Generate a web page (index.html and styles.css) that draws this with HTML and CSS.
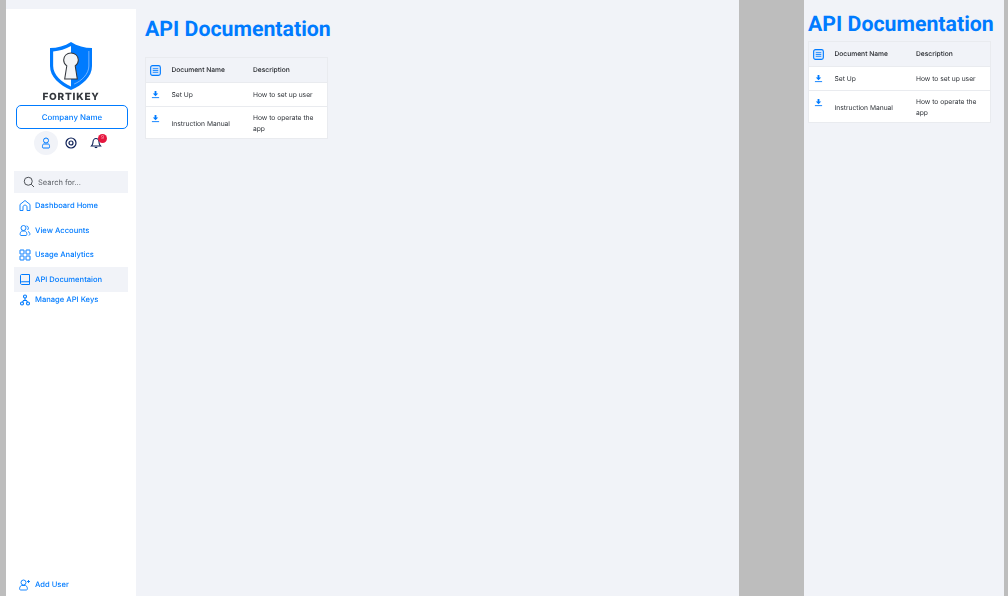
FILE: index.html
```html
<!DOCTYPE html>
<html lang="en">
<head>
    <meta charset="UTF-8">
    <meta name="viewport" content="width=device-width, initial-scale=1.0">
    <title>API Documentation</title>
    <link rel="stylesheet" href="styles.css">
</head>
<body>
    <div class="screen">
        <aside class="sidebar">
            <div class="logo">
                <svg class="logo_mark" viewBox="1 0 40 50" width="42" height="50" preserveAspectRatio="none">
                    <path d="M21 1 C27 5 34 7 41 7 V25 C41 36 32 44 21 49 C10 44 1 36 1 25 V7 C8 7 15 5 21 1 Z" fill="#007bff"/>
                    <path d="M21 5 C16 8 10 10 4 10.500 V25 C4 34 12 41 21 45.500 Z" fill="#fff"/>
                    <path d="M38 10 L38 25 C38 33 31 40 24 43" fill="none" stroke="#8fc1ff" stroke-width="0.8"/>
                    <path d="M21 12 C17 12 14 15 14 19 C14 21.500 15.300 23.600 17 24.800 L15 38 H27 L25 24.800 C26.700 23.600 28 21.500 28 19 C28 15 25 12 21 12 Z" fill="#f4f5f6" stroke="#33373d" stroke-width="1"/>
                </svg>
                <div class="logo_text">FORTIKEY</div>
            </div>
            <button class="company_btn" type="button">Company Name</button>
            <div class="quick_icons">
                <span class="quick_icon quick_icon_active">
                    <svg viewBox="0 0 24 24" width="12" height="12" fill="none" stroke="#007bff" stroke-width="2"><circle cx="12" cy="7" r="5"/><path d="M7 14 H17 C19 14 20 22 18 22 H6 C4 22 5 14 7 14 Z"/></svg>
                </span>
                <span class="quick_icon">
                    <svg viewBox="0 0 24 24" width="12" height="12" fill="none" stroke="#0c1f56" stroke-width="2.400"><circle cx="12" cy="12" r="10"/><circle cx="12" cy="12" r="4"/></svg>
                </span>
                <span class="quick_icon">
                    <svg viewBox="0 0 24 24" width="12" height="12" fill="none" stroke="#0c1f56" stroke-width="2.200"><path d="M3 18 C5 16 6 14 6 10 C6 6 9 3 12 3 C15 3 18 6 18 10 C18 14 19 16 21 18 Z"/><path d="M9.500 21 H14.500"/></svg>
                    <span class="badge">9</span>
                </span>
            </div>
            <div class="search">
                <svg viewBox="0 0 24 24" width="12" height="12" fill="none" stroke="#4d5157" stroke-width="2"><circle cx="10.500" cy="10.500" r="8"/><path d="M16.500 16.500 L22 22"/></svg>
                <span>Search for...</span>
            </div>
            <nav class="nav">
                <a class="nav_item nav_home">
                    <svg viewBox="0 0 24 24" width="12" height="13" fill="none" stroke="#007bff" stroke-width="1.800"><path d="M2 10 L12 2 L22 10 V22 H16 V15 C16 10 8 10 8 15 V22 H2 Z"/></svg>
                    Dashboard Home
                </a>
                <a class="nav_item">
                    <svg viewBox="0 0 24 24" width="12" height="13" fill="none" stroke="#007bff" stroke-width="1.800"><circle cx="9" cy="7" r="5"/><path d="M15 3 C19 3 20 9 17 11"/><path d="M6 13 C2 14 1 22 4 22 H14 C17 22 16 14 12 13 Z"/><path d="M18 14 C22 15 23 21 20 22"/></svg>
                    View Accounts
                </a>
                <a class="nav_item">
                    <svg viewBox="0 0 24 24" width="12" height="12" fill="none" stroke="#007bff" stroke-width="2"><rect x="2" y="2" width="8" height="8" rx="0.500"/><rect x="14" y="2" width="8" height="8" rx="0.500"/><rect x="2" y="14" width="8" height="8" rx="0.500"/><rect x="14" y="14" width="8" height="8" rx="0.500"/></svg>
                    Usage Analytics
                </a>
                <a class="nav_item nav_item_active">
                    <svg viewBox="0 0 24 24" width="12" height="13" fill="none" stroke="#007bff" stroke-width="2"><path d="M3 19 V4 C3 3 4 2 5 2 H21 V22 H6 C4 22 3 21 3 19 C3 17 4 16.500 6 16.500 H21"/></svg>
                    API Documentaion
                </a>
                <a class="nav_item nav_keys">
                    <svg viewBox="0 0 24 24" width="12" height="12" fill="none" stroke="#007bff" stroke-width="2.200"><circle cx="12" cy="5" r="3"/><circle cx="6" cy="19" r="3"/><circle cx="18" cy="19" r="3"/><path d="M12 8 V13 M7 16.500 L9 13 H15 L17 16.500"/></svg>
                    Manage API Keys
                </a>
            </nav>
            <a class="nav_item add_user">
                <svg viewBox="0 0 24 24" width="12" height="13" fill="none" stroke="#007bff" stroke-width="1.800"><circle cx="9" cy="8" r="5"/><path d="M5 14 C1 15 0 23 3 23 H15 C18 23 17 15 13 14 Z"/><path d="M19 3 V9 M16 6 H22"/></svg>
                Add User
            </a>
        </aside>

        <main class="content">
            <h1 class="page_title">API Documentation</h1>
            <table class="doc_table">
                <colgroup>
                    <col class="col_icon">
                    <col class="col_name">
                    <col>
                </colgroup>
                <thead>
                    <tr>
                        <th><svg class="list_icon" viewBox="0 0 12 12" width="11" height="11"><rect x="0.700" y="0.700" width="10.600" height="10.600" rx="2" fill="#dbe9fb" stroke="#007bff" stroke-width="1.200"/><path d="M3 4 H9 M3 6 H9 M3 8 H9" stroke="#007bff" stroke-width="0.900"/></svg></th>
                        <th>Document Name</th>
                        <th>Description</th>
                    </tr>
                </thead>
                <tbody>
                    <tr>
                        <td><svg viewBox="0 0 10 10" width="9" height="9" fill="#007bff"><path d="M4 1 H6 V4 H8 L5 7 L2 4 H4 Z"/><rect x="1" y="8" width="8" height="1"/></svg></td>
                        <td class="cell_text">Set Up</td>
                        <td class="cell_text">How to set up user</td>
                    </tr>
                    <tr>
                        <td class="cell_top"><svg viewBox="0 0 10 10" width="9" height="9" fill="#007bff"><path d="M4 1 H6 V4 H8 L5 7 L2 4 H4 Z"/><rect x="1" y="8" width="8" height="1"/></svg></td>
                        <td class="cell_low">Instruction Manual</td>
                        <td class="cell_text">How to operate the app</td>
                    </tr>
                </tbody>
            </table>
        </main>

        <div class="gap"></div>

        <main class="content content_small">
            <h1 class="page_title">API Documentation</h1>
            <table class="doc_table">
                <colgroup>
                    <col class="col_icon">
                    <col class="col_name">
                    <col>
                </colgroup>
                <thead>
                    <tr>
                        <th><svg class="list_icon" viewBox="0 0 12 12" width="11" height="11"><rect x="0.700" y="0.700" width="10.600" height="10.600" rx="2" fill="#dbe9fb" stroke="#007bff" stroke-width="1.200"/><path d="M3 4 H9 M3 6 H9 M3 8 H9" stroke="#007bff" stroke-width="0.900"/></svg></th>
                        <th>Document Name</th>
                        <th>Description</th>
                    </tr>
                </thead>
                <tbody>
                    <tr>
                        <td><svg viewBox="0 0 10 10" width="9" height="9" fill="#007bff"><path d="M4 1 H6 V4 H8 L5 7 L2 4 H4 Z"/><rect x="1" y="8" width="8" height="1"/></svg></td>
                        <td class="cell_text">Set Up</td>
                        <td class="cell_text">How to set up user</td>
                    </tr>
                    <tr>
                        <td class="cell_top"><svg viewBox="0 0 10 10" width="9" height="9" fill="#007bff"><path d="M4 1 H6 V4 H8 L5 7 L2 4 H4 Z"/><rect x="1" y="8" width="8" height="1"/></svg></td>
                        <td class="cell_low">Instruction Manual</td>
                        <td class="cell_text">How to operate the app</td>
                    </tr>
                </tbody>
            </table>
        </main>
    </div>
</body>
</html>
```

FILE: styles.css
```css
* {
    box-sizing: border-box;
}
html, body {
    margin: 0;
    height: 100%;
    overflow: hidden;
}
body {
    background-color: #bdbdbd;
    font-family: Inter, "Liberation Sans", sans-serif;
    text-rendering: geometricPrecision;
}
.screen {
    display: flex;
    height: 596px;
    padding: 0 4px 0 6px;
}
.sidebar {
    width: 130px;
    height: 587px;
    margin-top: 9px;
    background-color: #fff;
    box-shadow: 0 -9px 0 #f1f3f8;
    padding: 32px 8px 0 8px;
    display: flex;
    flex-direction: column;
    align-items: stretch;
    will-change: transform;
}
.logo {
    display: flex;
    flex-direction: column;
    align-items: center;
    margin-bottom: 2px;
}
.logo_mark {
    display: block;
}
.logo_text {
    font-family: Inter, sans-serif;
    font-weight: 800;
    font-size: 10px;
    line-height: 12px;
    letter-spacing: 0.800px;
    color: #33373d;
}
.company_btn {
    height: 24px;
    margin-left: 2px;
    border: 1.5px solid #007bff;
    border-radius: 5px;
    background-color: #fff;
    color: #007bff;
    font-family: Inter, sans-serif;
    font-size: 7.900px;
    font-weight: 500;
    text-rendering: geometricPrecision;
}
.quick_icons {
    display: flex;
    align-items: center;
    margin: 2px 0 16px 20px;
    gap: 1px;
}
.quick_icon {
    position: relative;
    width: 24px;
    height: 24px;
    border-radius: 50%;
    display: flex;
    align-items: center;
    justify-content: center;
}
.quick_icon_active {
    background-color: #f1f3f8;
}
.badge {
    position: absolute;
    top: 3px;
    right: 1px;
    width: 9px;
    height: 9px;
    border-radius: 50%;
    background-color: #e5173f;
    color: #ff9db0;
    font-size: 5px;
    line-height: 9px;
    text-align: center;
}
.search {
    height: 22px;
    background-color: #f1f3f8;
    display: flex;
    align-items: center;
    gap: 3px;
    padding: 0 0 0 9px;
    font-size: 7.500px;
    color: #5f6369;
}
.search span {
    padding-top: 1px;
}
.nav {
    display: flex;
    flex-direction: column;
}
.nav_item {
    height: 24.500px;
    display: flex;
    align-items: center;
    gap: 4px;
    padding-left: 5px;
    color: #007bff;
    font-size: 7.600px;
    font-weight: 500;
}
.nav_home {
    height: 25px;
}
.nav_item_active {
    background-color: #f1f3f8;
}
.nav_keys {
    height: 16px;
}
.add_user {
    margin-top: auto;
    padding-top: 1.500px;
}
.content {
    width: 603px;
    background-color: #f1f3f8;
    padding: 9px 0 0 9px;
}
.content_small {
    width: 200px;
    padding: 0 0 0 4px;
}
.gap {
    width: 65px;
}
.page_title {
    margin: 0;
    font-family: Roboto, sans-serif;
    font-weight: bold;
    font-size: 21.300px;
    line-height: 42px;
    color: #007bff;
}
.content .doc_table {
    margin-top: 6px;
}
.content_small .page_title {
    line-height: 50px;
}
.content_small .doc_table {
    margin-top: -9px;
}
.doc_table {
    width: 183px;
    table-layout: fixed;
    border-collapse: collapse;
    background-color: #fff;
    font-size: 6.700px;
    color: #2c3036;
    will-change: transform;
}
.col_icon {
    width: 26px;
}
.col_name {
    width: 81.500px;
}
.doc_table th, .doc_table td {
    border: 1px solid #e9ebef;
    border-width: 1px 0;
    padding: 0;
    text-align: left;
    line-height: 10.500px;
    vertical-align: middle;
}
.doc_table th {
    height: 25px;
    background-color: #f1f3f8;
    font-weight: 500;
    color: #24272c;
}
.doc_table td {
    height: 24px;
}
.doc_table tr:last-child td {
    height: 32px;
}
.doc_table th:first-child, .doc_table td:first-child {
    padding-left: 4px;
    border-left-width: 1px;
}
.doc_table td:first-child {
    padding-left: 5px;
}
.doc_table th:last-child, .doc_table td:last-child {
    border-right-width: 1px;
}
.doc_table svg {
    display: block;
}
.doc_table td.cell_text {
    padding-top: 2px;
}
.doc_table td.cell_low {
    padding-top: 4px;
}
.doc_table td.cell_top {
    vertical-align: top;
    padding-top: 7px;
}
```
